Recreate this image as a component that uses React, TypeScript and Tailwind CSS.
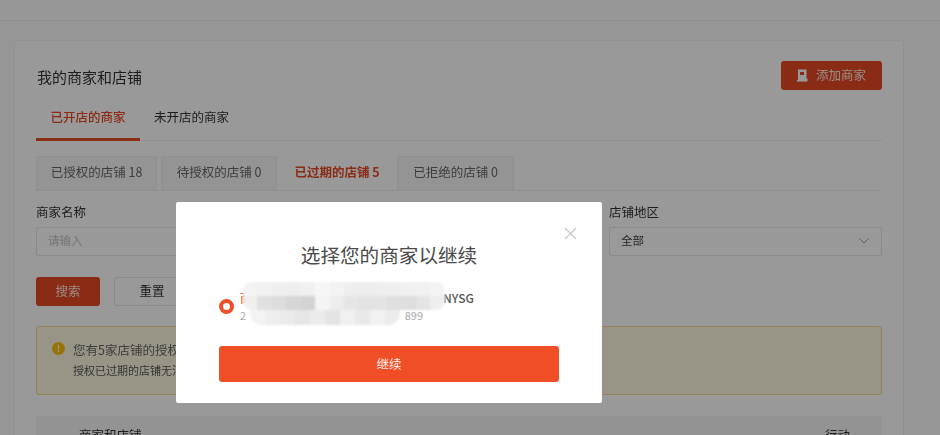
const font = { fontFamily: '"Noto Sans CJK SC", "Noto Sans", sans-serif' };

const BLUR_TOP = [
  ["#f3f3f3", "#f1f1f1", "#efefef", "#eeeeee", "#f0f0f0", "#f6f6f6", "#f3f3f3", "#eeeeee", "#ededed", "#eeeeee", "#efefef", "#f0f0f0", "#f1f1f1", "#f3f3f3"],
  ["#efefef", "#e0e0e0", "#dddddd", "#d6d6d6", "#d3d3d3", "#f4f4f4", "#ededed", "#e6e6e6", "#e3e3e3", "#e4e4e4", "#dfdfdf", "#dedede", "#e4e4e4", "#eeeeee"],
];
const BLUR_BOTTOM = ["#f3f3f3", "#eeeeee", "#ebebeb", "#e6e6e6", "#ececec", "#e4e4e4", "#f0f0f0", "#e8e8e8", "#f2f2f2", "#ececec"];

function Blur() {
  return (
    <div className="absolute left-[243px] top-[282px] w-[202px] h-[43px] blur-[1.2px]">
      <div className="h-[28px] flex flex-col overflow-hidden rounded-[9px]">
        {BLUR_TOP.map((row, i) => (
          <div key={i} className="flex flex-1">
            {row.map((c, j) => (
              <div key={j} className="flex-1" style={{ backgroundColor: c }} />
            ))}
          </div>
        ))}
      </div>
      <div className="ml-[7px] w-[150px] h-[15px] flex overflow-hidden rounded-b-[12px]">
        {BLUR_BOTTOM.map((c, j) => (
          <div key={j} className="flex-1" style={{ backgroundColor: c }} />
        ))}
      </div>
    </div>
  );
}

function Field({ label, value, muted, chevron }: { label: string; value: string; muted?: boolean; chevron?: boolean }) {
  return (
    <div className="flex flex-col">
      <div className="text-[12.5px] leading-[18px] text-[#333]">{label}</div>
      <div className="mt-[6px] h-[29px] border border-[#e6e6e6] rounded-[2px] flex items-center justify-between pl-[11px] pr-[12px] pb-px">
        <span className={muted ? "text-[11.5px] text-[#c4c4c4]" : "text-[11.5px] text-[#444]"}>{value}</span>
        {chevron && (
          <svg width="10" height="6" viewBox="0 0 10 6" fill="none" stroke="#9a9a9a" strokeWidth="1">
            <path d="M0.5 0.5 L5 5 L9.5 0.5" />
          </svg>
        )}
      </div>
    </div>
  );
}

export default function App() {
  return (
    <div className="relative w-[940px] h-[435px] overflow-hidden bg-[#fafafa]" style={font}>
      <div className="blur-[0.5px]">
        <div className="h-[21px] bg-[#fefefe] border-b border-[#efefef]" />

        {/* main card */}
        <div className="ml-[14px] mt-[19px] w-[890px] h-[500px] bg-white border border-[#f2f2f2] rounded-[4px] px-[21px]">
          <div className="flex items-start justify-between pt-[20px] h-[60px]">
            <h2 className="ml-px text-[15px] leading-[32px] text-[#333] font-normal">我的商家和店铺</h2>
            <button className="w-[101px] h-[29px] bg-[#e64a24] rounded-[3px] flex items-center justify-center gap-[8px] text-[12.5px] text-[#ffe6dc]">
              <svg width="11" height="13" viewBox="0 0 11 13" fill="#fff">
                <path d="M1 0.5 H9.5 V9.5 H10.5 V12.5 H0 V11 H1 Z" />
                <rect x="3" y="3" width="4" height="3" fill="#e64a24" />
              </svg>
              添加商家
            </button>
          </div>

          <div className="flex border-b border-[#efefef] h-[40px] items-stretch">
            <div className="w-[104px] border-b-[3px] border-[#e64a24] -mb-px pb-[5px] flex items-center justify-center text-[12.5px] text-[#e64a24] font-medium">
              已开店的商家
            </div>
            <div className="ml-[14px] pb-[7px] flex items-center text-[12.5px] text-[#333]">未开店的商家</div>
          </div>

          <div className="mt-[15px] flex gap-[4px] h-[35px] border-b border-[#efefef]">
            <div className="w-[121px] pb-px bg-[#f7f7f7] border border-[#f0f0f0] rounded-t-[2px] flex items-center justify-center text-[12.5px] text-[#666]">已授权的店铺 18</div>
            <div className="w-[116px] pb-px bg-[#f7f7f7] border border-[#f0f0f0] rounded-t-[2px] flex items-center justify-center text-[12.5px] text-[#666]">待授权的店铺 0</div>
            <div className="w-[112px] pb-px bg-white flex items-center justify-center text-[12.5px] font-bold text-[#e64a24]">已过期的店铺 5</div>
            <div className="w-[117px] pb-px bg-[#f7f7f7] border border-[#f0f0f0] rounded-t-[2px] flex items-center justify-center text-[12.5px] text-[#666]">已拒绝的店铺 0</div>
          </div>

          <div className="mt-[12px] grid grid-cols-3 gap-[13.5px]">
            <Field label="商家名称" value="请输入" muted />
            <Field label="店铺名称" value="请输入" muted />
            <Field label="店铺地区" value="全部" chevron />
          </div>

          <div className="mt-[21px] flex gap-[14px]">
            <button className="w-[64px] h-[29px] bg-[#e64a24] rounded-[3px] text-[12.5px] text-[#ffe6dc]">搜索</button>
            <button className="w-[76px] h-[29px] bg-white border border-[#e6e6e6] rounded-[3px] text-[12.5px] text-[#333]">重置</button>
          </div>

          <div className="mt-[20px] h-[69px] bg-[#fff9e0] border border-[#f5d98a] rounded-[3px] flex pl-[15px] pt-[13px]">
            <div className="mt-[2px] w-[13px] h-[13px] rounded-full bg-[#fbbf0d] flex items-center justify-center text-[9px] leading-none font-bold text-white">!</div>
            <div className="ml-[8px]">
              <div className="text-[12.5px] leading-[20px] text-[#666]">您有5家店铺的授权已过期</div>
              <div className="text-[11px] leading-[20px] text-[#555]">授权已过期的店铺无法继续使用</div>
            </div>
          </div>

          <div className="mt-[21px] h-[40px] bg-[#f5f5f5] rounded-t-[2px] flex justify-between pl-[43px] pr-[32px] pt-[10px] text-[12.5px] text-[#333]">
            <span>商家和店铺</span>
            <span>行动</span>
          </div>
        </div>
      </div>

      {/* overlay */}
      <div className="absolute inset-0 bg-black/40" />

      {/* dialog */}
      <div className="absolute left-[176px] top-[202px] w-[426px] h-[201px] bg-white rounded-[2px] px-[43px]">
        <svg className="absolute right-[25px] top-[25px]" width="13" height="13" viewBox="0 0 13 13" stroke="#c8c8c8" strokeWidth="1.2" fill="none">
          <path d="M1 1 L12 12 M12 1 L1 12" />
        </svg>
        <h3 className="pt-[37px] text-center text-[19.6px] leading-[32px] font-normal text-[#4a4a4a]">选择您的商家以继续</h3>
        <div className="mt-[14px] h-[42px] flex items-center">
          <div className="w-[15px] h-[15px] rounded-full border-[4.5px] border-[#f04e26] bg-white" />
          <div className="ml-[6px]">
            <div className="w-[234px] flex justify-between text-[12px] leading-[19px] font-medium text-[#555]">
              <span className="text-[#f04e26]">商</span>
              <span>NYSG</span>
            </div>
            <div className="w-[183px] flex justify-between text-[11px] leading-[17px] text-[#aaa]">
              <span>2</span>
              <span>899</span>
            </div>
          </div>
        </div>
        <button className="mt-[19px] w-[340px] h-[36px] bg-[#f04e26] rounded-[3px] text-[12.5px] text-[#ffece4] block">继续</button>
      </div>
      <Blur />
    </div>
  );
}
